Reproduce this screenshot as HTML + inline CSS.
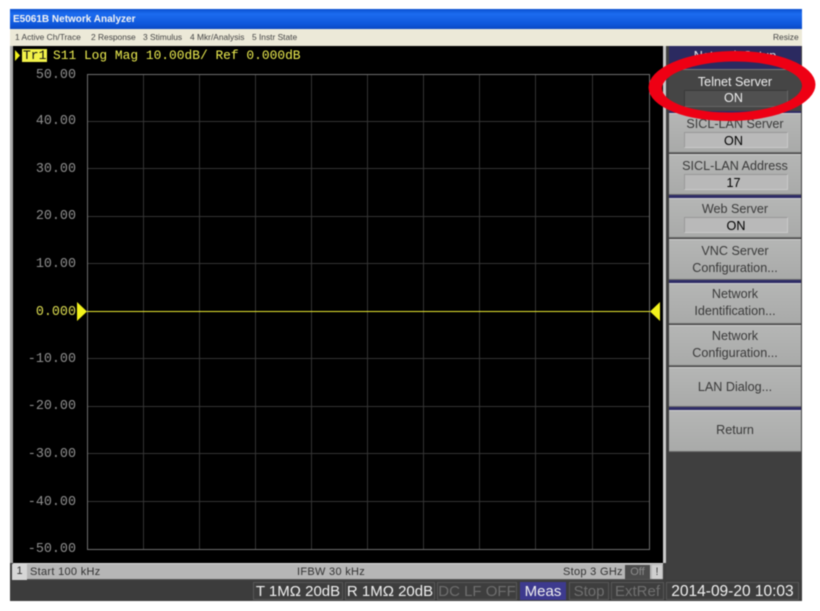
<!DOCTYPE html>
<html><head><meta charset="utf-8">
<style>
html,body{margin:0;padding:0;background:#fff}
#r{position:relative;width:820px;height:611px;overflow:hidden;background:#fff;font-family:"Liberation Sans",sans-serif}
#b{position:absolute;left:0;top:0;width:820px;height:611px;filter:blur(.45px)}
#r div{position:absolute;box-sizing:border-box}
.m{font-family:"Liberation Mono",monospace;font-size:13.400px;line-height:16px;white-space:pre}
.y{color:#8e8e8e;text-align:right;left:14px;width:62px}
.k{left:669px;width:132px;background:linear-gradient(180deg,#b5b6b5,#a9aaa9);border-top:1px solid #cfcfcf;border-bottom:1px solid #6e6e6e;color:#3a3a3a;font-size:12.600px;line-height:17px;text-align:center}
.f{left:16px;width:104px;height:16px;background:#b9b9b9;border:1px solid #cacaca;border-left-color:#999;border-top-color:#999;line-height:17px;font-size:12.600px}
.n{left:669px;width:132px;height:3px;background:#2e2c66}
.b{height:18px;top:582px;background:#3e3e3e;border:1px solid #575757;font-size:15px;line-height:17px;text-align:center;color:#f0f0f0;white-space:nowrap}
.s{color:#444;top:31px;line-height:12px;white-space:nowrap;font-size:8.400px}
</style></head><body>
<div id="r"><div id="b">
<div style="left:10px;top:9px;width:792px;height:20px;background:linear-gradient(180deg,#0a4fd0 0%,#1c6cf0 25%,#0f58dc 75%,#0a48c4 100%)"></div>
<div style="left:13px;top:13px;color:#f4f4f4;font-size:10px;font-weight:bold;line-height:14px">E5061B Network Analyzer</div>
<div style="left:10px;top:29px;width:792px;height:17px;background:#ece9d8"></div>
<div class="s" style="left:15px">1 Active Ch/Trace</div>
<div class="s" style="left:91px">2 Response</div>
<div class="s" style="left:143px">3 Stimulus</div>
<div class="s" style="left:190px">4 Mkr/Analysis</div>
<div class="s" style="left:252px">5 Instr State</div>
<div class="s" style="left:773px">Resize</div>

<div style="left:10px;top:46px;width:792px;height:555px;background:#3c3c3c"></div>
<div style="left:10px;top:46px;width:3px;height:517px;background:#a8a8a8"></div>
<div style="left:13px;top:46px;width:650px;height:517px;background:#000"></div>
<div style="left:663px;top:46px;width:3px;height:517px;background:#c9c9c9"></div>
<div style="left:666px;top:46px;width:136px;height:534px;background:#3f3f3f"></div>

<svg style="position:absolute;left:0;top:0" width="820" height="611">
<g stroke="#343434" stroke-width="1" shape-rendering="crispEdges">
<path d="M143.500 74V549M199.500 74V549M255.500 74V549M311.500 74V549M367.500 74V549M423.500 74V549M479.500 74V549M535.500 74V549M592.500 74V549"/>
<path d="M87 121.500H649M87 168.500H649M87 216.500H649M87 263.500H649M87 358.500H649M87 406.500H649M87 453.500H649M87 501.500H649"/>
</g>
<rect x="87.500" y="74.500" width="562" height="475" fill="none" stroke="#6e6e6e" shape-rendering="crispEdges"/>
<path d="M87 311.500H650" stroke="#e8e830" stroke-width="1" shape-rendering="crispEdges"/>
<path d="M77 302L87 311.500L77 321Z" fill="#f2f21c"/>
<path d="M660 302L650 311.500L660 321Z" fill="#f2f21c"/>
<path d="M15 50L20 55.500L15 61Z" fill="#f2f21c"/>
</svg>

<div style="left:22px;top:49px;width:25px;height:13px;background:#f2f24a"></div>
<div class="m" style="left:23px;top:48px;color:#111;font-size:13px">Tr1</div>
<div class="m" style="left:53px;top:48px;color:#ecec50;font-size:12.900px">S11 Log Mag 10.00dB/ Ref 0.000dB</div>

<div class="m y" style="top:68px">50.00</div>
<div class="m y" style="top:114px">40.00</div>
<div class="m y" style="top:162px">30.00</div>
<div class="m y" style="top:209px">20.00</div>
<div class="m y" style="top:257px">10.00</div>
<div class="m y" style="top:305px;color:#dcdc50">0.000</div>
<div class="m y" style="top:352px">-10.00</div>
<div class="m y" style="top:399px">-20.00</div>
<div class="m y" style="top:447px">-30.00</div>
<div class="m y" style="top:495px">-40.00</div>
<div class="m y" style="top:542px">-50.00</div>

<div style="left:669px;top:46px;width:132px;height:23px;background:#2b2a60;color:#e8e8e8;font-size:12.600px;text-align:center;line-height:20px">Network Setup</div>
<div class="k" style="top:69px;height:43px;background:#454545;color:#eee;padding-top:4px;border-top-color:#777;border-bottom-color:#222">Telnet Server</div>
<div class="f" style="left:684px;top:90px;background:#505050;border-color:#3a3a3a #666 #666 #3a3a3a;color:#eee;text-align:center;padding-right:5px;height:17px;line-height:15px">ON</div>
<div class="n" style="top:111px;height:2px"></div>
<div class="k" style="top:113px;height:40px;padding-top:2px">SICL-LAN Server</div>
<div class="f" style="left:684px;top:132px;text-align:center;padding-right:5px">ON</div>
<div class="k" style="top:154px;height:41px;padding-top:3px">SICL-LAN Address</div>
<div class="f" style="left:684px;top:174px;text-align:center;padding-right:5px">17</div>
<div class="n" style="top:195px"></div>
<div class="k" style="top:198px;height:40px;padding-top:2px">Web Server</div>
<div class="f" style="left:684px;top:217px;text-align:center">ON</div>
<div class="k" style="top:239px;height:41px;padding-top:3px">VNC Server<br>Configuration...</div>
<div class="n" style="top:280px"></div>
<div class="k" style="top:283px;height:41px;padding-top:2px">Network<br>Identification...</div>
<div class="k" style="top:325px;height:41px;padding-top:2px">Network<br>Configuration...</div>
<div class="k" style="top:367px;height:40px;padding-top:11px">LAN Dialog...</div>
<div class="n" style="top:407px"></div>
<div class="k" style="top:410px;height:42px;padding-top:11px">Return</div>

<div style="left:13px;top:563px;width:650px;height:17px;background:#b6b6b6;border-top:1px solid #ddd;border-bottom:1px solid #555"></div>
<div style="left:12px;top:564px;width:15px;height:16px;background:#d6d6d6;color:#333;font-size:11px;line-height:15px;text-align:center">1</div>
<div style="left:30px;top:565px;color:#333;font-size:11px;line-height:14px;letter-spacing:.3px">Start 100 kHz</div>
<div style="left:297px;top:565px;color:#333;font-size:11px;line-height:14px;letter-spacing:.3px">IFBW 30 kHz</div>
<div style="left:563px;top:565px;color:#333;font-size:11px;line-height:14px;letter-spacing:.3px">Stop 3 GHz</div>
<div style="left:625px;top:565px;width:25px;height:14px;background:#4c4c4c;color:#8c8c8c;font-size:11px;line-height:14px;text-align:center">Off</div>
<div style="left:652px;top:565px;width:10px;height:14px;background:#cfcfcf;color:#444;font-size:11px;line-height:14px;text-align:center">!</div>

<div class="b" style="left:253px;width:90px">T 1MΩ 20dB</div>
<div class="b" style="left:345px;width:90px">R 1MΩ 20dB</div>
<div class="b" style="left:437px;width:80px;color:#6e6e6e">DC LF OFF</div>
<div class="b" style="left:520px;width:46px;background:#3d3a8e;border-color:#3d3a8e">Meas</div>
<div class="b" style="left:569px;width:40px;color:#707070">Stop</div>
<div class="b" style="left:611px;width:53px;color:#707070">ExtRef</div>
<div class="b" style="left:666px;width:133px;font-size:15.500px">2014-09-20 10:03</div>

<svg style="position:absolute;left:0;top:0" width="820" height="611">
<g transform="rotate(-1.2 732 87)">
<path fill="#ee0014" fill-rule="evenodd" d="M648.500 86A83.500 35 0 1 0 815.500 86A83.500 35 0 1 0 648.500 86ZM662 87A70 25.500 0 1 1 802 87A70 25.500 0 1 1 662 87Z"/>
</g>
</svg>
</div></div>
</body></html>
